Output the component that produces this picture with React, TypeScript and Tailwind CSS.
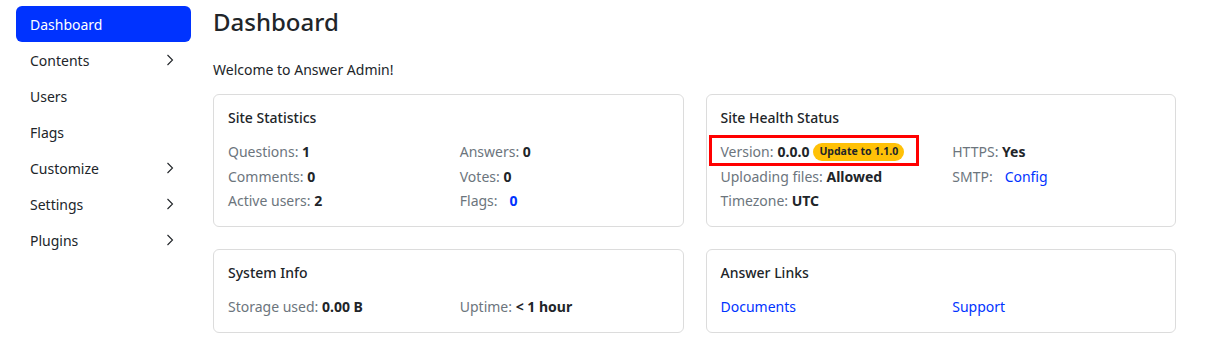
import React from "react";

const Chevron = () => (
  <svg width="8" height="12" viewBox="0 0 8 12" fill="none" className="text-[#212529]">
    <path d="M1.5 1 L6.5 6 L1.5 11" stroke="currentColor" strokeWidth="1.1" />
  </svg>
);

const NavItem = ({ label, active, chev }: { label: string; active?: boolean; chev?: boolean }) => (
  <div
    className={
      active
        ? "flex h-9 items-center justify-between rounded-md bg-[#0033ff] px-[14px] text-white"
        : "flex h-9 items-center justify-between rounded-md px-[14px] text-[#212529]"
    }
  >
    <span>{label}</span>
    {chev ? <span className="mr-[3px] flex items-center"><Chevron /></span> : null}
  </div>
);

const Stat = ({ label, value }: { label: string; value: React.ReactNode }) => (
  <div className="leading-[21px] whitespace-nowrap">
    <span className="text-[#6c757d]">{label}</span>{" "}
    <span className="font-bold text-[#212529]">{value}</span>
  </div>
);

const Card = ({ title, children, extra }: { title: string; children: React.ReactNode; extra?: React.ReactNode }) => (
  <div className="relative rounded-md border border-[#dcdcdc] bg-white pl-[14px] pr-[15px] pb-[15px] pt-[13px]">
    <div className="text-[14px] font-medium leading-[20px] text-[#212529]">{title}</div>
    <div className="mt-[13px] grid grid-cols-2 gap-x-6 gap-y-[3.5px]">{children}</div>
    {extra}
  </div>
);

export default function App() {
  return (
    <div
      className="flex h-[339px] w-[1214px] bg-white text-[14px] text-[#212529]"
      style={{ fontFamily: '"Noto Sans", "Open Sans", sans-serif' }}
    >
      <div className="ml-4 mt-[6px] flex w-[175px] flex-col">
        <NavItem label="Dashboard" active />
        <NavItem label="Contents" chev />
        <NavItem label="Users" />
        <NavItem label="Flags" />
        <NavItem label="Customize" chev />
        <NavItem label="Settings" chev />
        <NavItem label="Plugins" chev />
      </div>
      <div className="ml-[22px] w-[963px]">
        <h3 className="mt-[5px] text-[24px] font-medium leading-[34px] text-[#212529]">Dashboard</h3>
        <p className="mt-[20px] leading-[21px]">Welcome to Answer Admin!</p>
        <div className="mt-[14px] grid grid-cols-2 gap-[22px]">
          <Card title="Site Statistics">
            <Stat label="Questions:" value="1" />
            <Stat label="Answers:" value="0" />
            <Stat label="Comments:" value="0" />
            <Stat label="Votes:" value="0" />
            <Stat label="Active users:" value="2" />
            <div className="leading-[21px]">
              <span className="text-[#6c757d]">Flags:</span>
              <span className="ml-[12px] font-bold text-[#0033ff]">0</span>
            </div>
          </Card>
          <Card
            title="Site Health Status"
            extra={<div className="pointer-events-none absolute left-[2px] top-[40px] h-[31px] w-[210px] border-[3px] border-[#ff0000]" />}
          >
            <div className="flex items-center leading-[21px] whitespace-nowrap">
              <span className="text-[#6c757d]">Version:</span>
              <span className="ml-[4px] font-bold">0.0.0</span>
              <span className="ml-[4px] inline-flex h-[18px] items-center rounded-full bg-[#ffc107] px-[6px] text-[10.5px] font-bold leading-none text-[#212529]">
                Update to 1.1.0
              </span>
            </div>
            <Stat label="HTTPS:" value="Yes" />
            <Stat label="Uploading files:" value="Allowed" />
            <div className="leading-[21px]">
              <span className="text-[#6c757d]">SMTP:</span>
              <span className="ml-[12px] text-[#0033ff]">Config</span>
            </div>
            <Stat label="Timezone:" value="UTC" />
          </Card>
          <Card title="System Info">
            <Stat label="Storage used:" value="0.00 B" />
            <Stat label="Uptime:" value="< 1 hour" />
          </Card>
          <Card title="Answer Links">
            <div className="leading-[21px] text-[#0033ff]">Documents</div>
            <div className="leading-[21px] text-[#0033ff]">Support</div>
          </Card>
        </div>
      </div>
    </div>
  );
}
